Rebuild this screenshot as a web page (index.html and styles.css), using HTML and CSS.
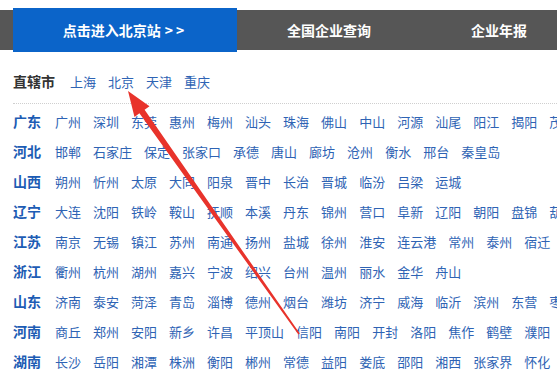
FILE: index.html
```html
<!DOCTYPE html>
<html lang="zh-CN">
<head>
<meta charset="utf-8">
<title>城市导航</title>
<link rel="stylesheet" href="styles.css">
</head>
<body>
<div class="page">
  <nav class="topnav">
    <a class="tab tab-active">点击进入北京站 <span class="chev">&gt;&gt;</span></a>
    <a class="tab tab-query">全国企业查询</a>
    <a class="tab tab-report">企业年报</a>
  </nav>

  <div class="content">
    <div class="direct">
      <span class="label label-direct">直辖市</span>
      <a class="city">上海</a><a class="city">北京</a><a class="city">天津</a><a class="city">重庆</a>
    </div>

    <div class="provinces">
      <div class="row"><span class="label">广东</span><a class="city">广州</a><a class="city">深圳</a><a class="city">东莞</a><a class="city">惠州</a><a class="city">梅州</a><a class="city">汕头</a><a class="city">珠海</a><a class="city">佛山</a><a class="city">中山</a><a class="city">河源</a><a class="city">汕尾</a><a class="city">阳江</a><a class="city">揭阳</a><a class="city">茂名</a></div>
      <div class="row"><span class="label">河北</span><a class="city">邯郸</a><a class="city">石家庄</a><a class="city">保定</a><a class="city">张家口</a><a class="city">承德</a><a class="city">唐山</a><a class="city">廊坊</a><a class="city">沧州</a><a class="city">衡水</a><a class="city">邢台</a><a class="city">秦皇岛</a></div>
      <div class="row"><span class="label">山西</span><a class="city">朔州</a><a class="city">忻州</a><a class="city">太原</a><a class="city">大同</a><a class="city">阳泉</a><a class="city">晋中</a><a class="city">长治</a><a class="city">晋城</a><a class="city">临汾</a><a class="city">吕梁</a><a class="city">运城</a></div>
      <div class="row"><span class="label">辽宁</span><a class="city">大连</a><a class="city">沈阳</a><a class="city">铁岭</a><a class="city">鞍山</a><a class="city">抚顺</a><a class="city">本溪</a><a class="city">丹东</a><a class="city">锦州</a><a class="city">营口</a><a class="city">阜新</a><a class="city">辽阳</a><a class="city">朝阳</a><a class="city">盘锦</a><a class="city">葫芦岛</a></div>
      <div class="row"><span class="label">江苏</span><a class="city">南京</a><a class="city">无锡</a><a class="city">镇江</a><a class="city">苏州</a><a class="city">南通</a><a class="city">扬州</a><a class="city">盐城</a><a class="city">徐州</a><a class="city">淮安</a><a class="city">连云港</a><a class="city">常州</a><a class="city">泰州</a><a class="city">宿迁</a></div>
      <div class="row"><span class="label">浙江</span><a class="city">衢州</a><a class="city">杭州</a><a class="city">湖州</a><a class="city">嘉兴</a><a class="city">宁波</a><a class="city">绍兴</a><a class="city">台州</a><a class="city">温州</a><a class="city">丽水</a><a class="city">金华</a><a class="city">舟山</a></div>
      <div class="row"><span class="label">山东</span><a class="city">济南</a><a class="city">泰安</a><a class="city">菏泽</a><a class="city">青岛</a><a class="city">淄博</a><a class="city">德州</a><a class="city">烟台</a><a class="city">潍坊</a><a class="city">济宁</a><a class="city">威海</a><a class="city">临沂</a><a class="city">滨州</a><a class="city">东营</a><a class="city">枣庄</a></div>
      <div class="row"><span class="label">河南</span><a class="city">商丘</a><a class="city">郑州</a><a class="city">安阳</a><a class="city">新乡</a><a class="city">许昌</a><a class="city">平顶山</a><a class="city">信阳</a><a class="city">南阳</a><a class="city">开封</a><a class="city">洛阳</a><a class="city">焦作</a><a class="city">鹤壁</a><a class="city">濮阳</a><a class="city">周口</a></div>
      <div class="row"><span class="label">湖南</span><a class="city">长沙</a><a class="city">岳阳</a><a class="city">湘潭</a><a class="city">株洲</a><a class="city">衡阳</a><a class="city">郴州</a><a class="city">常德</a><a class="city">益阳</a><a class="city">娄底</a><a class="city">邵阳</a><a class="city">湘西</a><a class="city">张家界</a><a class="city">怀化</a></div>
    </div>
  </div>

  <svg class="arrow" width="557" height="379" viewBox="0 0 557 379" aria-hidden="true">
    <polygon fill="#e8332b" points="128,91 149.5,106.2 144.6,109.8 299.8,333.5 298.4,334.4 139.4,113.3 134.5,116.9"/>
  </svg>
</div>
</body>
</html>
```

FILE: styles.css
```css
html, body {
  margin: 0;
  padding: 0;
  background: #ffffff;
}

body {
  width: 557px;
  height: 379px;
  overflow: hidden;
  font-family: "Microsoft YaHei", "Noto Sans CJK SC", "Noto Sans", sans-serif;
}

.page {
  position: relative;
  width: 557px;
  height: 379px;
  overflow: hidden;
}

.topnav {
  display: flex;
  align-items: stretch;
  height: 44px;
  margin-top: 8px;
  background: linear-gradient(to bottom, transparent 0, transparent 2px, #565656 2px, #565656 42px, transparent 42px);
  white-space: nowrap;
}

.tab {
  display: flex;
  align-items: center;
  color: #ffffff;
  font-size: 14px;
  font-weight: bold;
  text-decoration: none;
}

.chev {
  margin-left: 4px;
  letter-spacing: 3px;
}

.tab-active {
  justify-content: center;
  width: 224px;
  margin-left: 13px;
  background: #0b64c9;
}

.tab-query {
  margin-left: 50px;
}

.tab-report {
  margin-left: 100px;
}

.content {
  padding-left: 13px;
  margin-top: 14px;
}

.direct {
  display: flex;
  align-items: center;
  height: 30px;
  padding-bottom: 7px;
  border-bottom: 1px dotted #cfcfcf;
  white-space: nowrap;
}

.label {
  flex: none;
  width: 42px;
  font-size: 14px;
  font-weight: bold;
  color: #1d5cb4;
}

.label-direct {
  width: 57px;
  color: #333333;
}

.provinces {
  margin-top: 2px;
}

.row {
  display: flex;
  align-items: center;
  height: 30px;
  white-space: nowrap;
}

.city {
  flex: none;
  margin-right: 12px;
  font-size: 13px;
  color: #2e63b4;
  text-decoration: none;
}

.arrow {
  position: absolute;
  left: 0;
  top: 0;
  pointer-events: none;
}
```
